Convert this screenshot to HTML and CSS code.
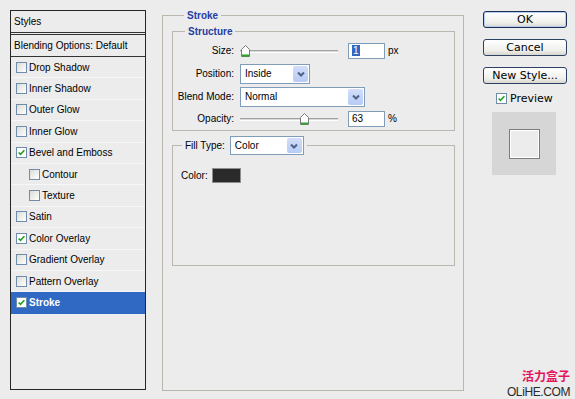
FILE: index.html
```html
<!DOCTYPE html>
<html lang="en">
<head>
    <meta charset="UTF-8">
    <meta name="viewport" content="width=device-width, initial-scale=1.0">
    <title>Layer Style</title>
    <link rel="stylesheet" href="styles.css">
</head>
<body>
    <div class="dialog">
        <!-- lijevi popis stilova -->
        <div class="styles-list">
            <div class="list-head">Styles</div>
            <div class="list-blend">Blending Options: Default</div>
            <div class="list-row"><span class="cb"></span>Drop Shadow</div>
            <div class="list-row"><span class="cb"></span>Inner Shadow</div>
            <div class="list-row"><span class="cb"></span>Outer Glow</div>
            <div class="list-row"><span class="cb"></span>Inner Glow</div>
            <div class="list-row"><span class="cb on"><svg viewBox="0 0 11 11"><path d="M2 5.5 L4.3 7.8 L9 2.8"/></svg></span>Bevel and Emboss</div>
            <div class="list-row sub"><span class="cb"></span>Contour</div>
            <div class="list-row sub"><span class="cb"></span>Texture</div>
            <div class="list-row"><span class="cb"></span>Satin</div>
            <div class="list-row"><span class="cb on"><svg viewBox="0 0 11 11"><path d="M2 5.5 L4.3 7.8 L9 2.8"/></svg></span>Color Overlay</div>
            <div class="list-row"><span class="cb"></span>Gradient Overlay</div>
            <div class="list-row"><span class="cb"></span>Pattern Overlay</div>
            <div class="list-row selected"><span class="cb on"><svg viewBox="0 0 11 11"><path d="M2 5.5 L4.3 7.8 L9 2.8"/></svg></span>Stroke</div>
        </div>

        <!-- srednji dio: postavke -->
        <div class="main">
            <fieldset class="group outer">
                <legend class="title">Stroke</legend>

                <fieldset class="group structure">
                    <legend class="title">Structure</legend>

                    <div class="field size-row">
                        <span class="lbl">Size:</span>
                        <div class="slider">
                            <span class="track"></span>
                            <svg class="thumb" style="left: 1px" viewBox="0 0 9 12"><path d="M0.5 4.5 L4.5 0.5 L8.5 4.5 V11.5 H0.5 Z" fill="#fff" stroke="#7a7a7a"/><path d="M1 10.5 H8" stroke="#2ea02e" stroke-width="2"/></svg>
                        </div>
                        <span class="num"><span class="sel">1</span></span>
                        <span class="unit">px</span>
                    </div>

                    <div class="field pos-row">
                        <span class="lbl">Position:</span>
                        <div class="select w70">
                            <span class="val">Inside</span>
                            <span class="arrow"><svg viewBox="0 0 10 10"><path d="M2 3.5 L5 6.5 L8 3.5"/></svg></span>
                        </div>
                    </div>

                    <div class="field blend-row">
                        <span class="lbl">Blend Mode:</span>
                        <div class="select w125">
                            <span class="val">Normal</span>
                            <span class="arrow"><svg viewBox="0 0 10 10"><path d="M2 3.5 L5 6.5 L8 3.5"/></svg></span>
                        </div>
                    </div>

                    <div class="field op-row">
                        <span class="lbl">Opacity:</span>
                        <div class="slider">
                            <span class="track"></span>
                            <svg class="thumb" style="left: 60px" viewBox="0 0 9 12"><path d="M0.5 4.5 L4.5 0.5 L8.5 4.5 V11.5 H0.5 Z" fill="#fff" stroke="#7a7a7a"/><path d="M1 10.5 H8" stroke="#2ea02e" stroke-width="2"/></svg>
                        </div>
                        <span class="num">63</span>
                        <span class="unit">%</span>
                    </div>
                </fieldset>

                <fieldset class="group fill">
                    <legend class="fill-legend">
                        <span class="fill-lbl">Fill Type:</span>
                        <div class="select w74">
                            <span class="val">Color</span>
                            <span class="arrow"><svg viewBox="0 0 10 10"><path d="M2 3.5 L5 6.5 L8 3.5"/></svg></span>
                        </div>
                    </legend>
                    <div class="color-row">
                        <span>Color:</span>
                        <span class="swatch"></span>
                    </div>
                </fieldset>
            </fieldset>
        </div>

        <!-- desni gumbi -->
        <div class="actions">
            <div class="btn default">OK</div>
            <div class="btn">Cancel</div>
            <div class="btn">New Style...</div>
            <div class="preview-check">
                <span class="cb on"><svg viewBox="0 0 11 11"><path d="M2 5.5 L4.3 7.8 L9 2.8"/></svg></span>Preview
            </div>
            <div class="preview-box">
                <div class="preview-square"></div>
            </div>
        </div>

        <div class="watermark">
            <div class="wm-cn">活力盒子</div>
            <div class="wm-en">OLiHE.COM</div>
        </div>
    </div>
</body>
</html>
```

FILE: styles.css
```css
* {
    margin: 0;
    padding: 0;
    box-sizing: border-box;
}

html, body {
    width: 100%;
    height: 100%;
    overflow: hidden;
    background: #ececec;
}

body {
    font-family: "Liberation Sans", Arial, sans-serif;
    font-size: 10px;
    color: #000;
}

.dialog {
    position: relative;
    display: flex;
    align-items: flex-start;
    height: 399px;
    padding: 10px 0 0 10px;
}

/* popis stilova */
.styles-list {
    width: 136px;
    height: 380px;
    border: 1px solid #262626;
    display: flex;
    flex-direction: column;
}

.list-head {
    height: 24px;
    line-height: 21px;
    padding-left: 3px;
    border-bottom: 3px double #333;
}

.list-blend {
    height: 22px;
    line-height: 21px;
    padding-left: 3px;
    border-bottom: 1px solid #333;
}

.list-row {
    height: 21.4px;
    display: flex;
    align-items: center;
    padding-left: 5px;
    border-bottom: 1px solid #f7f7f7;
}

.list-row.sub {
    padding-left: 18px;
}

.list-row.selected {
    background: #2f69c4;
    color: #fff;
    font-weight: bold;
    border-bottom-color: #2f69c4;
}

.cb {
    width: 11px;
    height: 11px;
    margin-right: 2px;
    border: 1px solid #6f8cab;
    background: linear-gradient(135deg, #dcdcd6, #fff);
    display: inline-flex;
    flex-shrink: 0;
}

.cb svg {
    width: 9px;
    height: 9px;
}

.cb path {
    fill: none;
    stroke: #21a121;
    stroke-width: 2;
}

.cb.on {
    background: #fff;
}

/* srednji dio */
.main {
    margin-left: 16px;
}

.group {
    border: 1px solid #bab7af;
    min-width: 0;
}

.title {
    color: #1f3ea3;
    font-weight: bold;
    padding: 0 3px;
    margin-left: 12px;
}

.outer {
    width: 302px;
    height: 381px;
    padding: 5px 0 0 9px;
}

.structure {
    width: 283px;
    height: 105px;
    padding-top: 2px;
}

.field {
    display: flex;
    align-items: center;
    height: 23px;
}

.op-row {
    height: 21px;
}

.lbl {
    width: 61px;
    text-align: right;
    margin-right: 6px;
}

.slider {
    position: relative;
    width: 98px;
    height: 14px;
}

.track {
    position: absolute;
    left: 0;
    right: 0;
    top: 6px;
    height: 3px;
    border-top: 1px solid #a3a3a3;
    border-bottom: 1px solid #fff;
    background: #d8d8d8;
}

.thumb {
    position: absolute;
    top: 1px;
    width: 9px;
    height: 12px;
}

.num {
    width: 37px;
    height: 16px;
    margin-left: 10px;
    border: 1px solid #7f9db9;
    background: #fff;
    line-height: 14px;
    padding-left: 3px;
}

.sel {
    background: #2f69c4;
    color: #fff;
    padding: 0 1px;
}

.unit {
    margin-left: 3px;
}

.select {
    height: 20px;
    border: 1px solid #7f9db9;
    background: #fff;
    display: flex;
    align-items: center;
    justify-content: space-between;
    padding: 1px;
}

.w70 { width: 70px; }
.w125 { width: 125px; }
.w74 { width: 74px; height: 19px; }

.val {
    padding-left: 3px;
}

.arrow {
    width: 15px;
    height: 100%;
    background: linear-gradient(#d2defa, #b7cbf5);
    border-radius: 2px;
    display: flex;
    align-items: center;
    justify-content: center;
}

.arrow svg {
    width: 10px;
    height: 10px;
}

.arrow path {
    fill: none;
    stroke: #4d6185;
    stroke-width: 2;
}

.fill {
    width: 283px;
    height: 130px;
    margin-top: 5px;
    padding: 13px 0 0 8px;
}

.fill-legend {
    display: flex;
    align-items: center;
    margin-left: 1px;
    padding: 0 3px;
}

.fill-lbl {
    margin-right: 5px;
}

.color-row {
    display: flex;
    align-items: center;
    gap: 4px;
}

.swatch {
    width: 29px;
    height: 15px;
    background: #2a2a2a;
    border: 1px solid #8e8e8e;
}

/* desni gumbi */
.actions {
    margin-left: 19px;
    width: 84px;
    display: flex;
    flex-direction: column;
    font-family: "DejaVu Sans", sans-serif;
    font-size: 11px;
}

.btn {
    height: 17px;
    margin-top: 1px;
    margin-bottom: 10px;
    border: 1px solid #2d4263;
    border-radius: 3px;
    background: linear-gradient(#fff, #f0efec 70%, #d9d6ce);
    text-align: center;
    line-height: 15px;
}

.btn:nth-child(3) {
    margin-bottom: 8px;
}

.btn.default {
    border-color: #1a2f52;
    box-shadow: inset 0 0 0 1px #b8cdf3;
}

.preview-check {
    display: flex;
    align-items: center;
    margin: 0 0 7px 13px;
}

.preview-check .cb {
    margin-right: 3px;
}

.preview-box {
    width: 64px;
    height: 63px;
    margin-left: 9px;
    background: #d6d6d6;
    display: flex;
    align-items: center;
    justify-content: center;
}

.preview-square {
    width: 31px;
    height: 30px;
    background: #ececec;
    border: 1px solid #7d7d7d;
    box-shadow: inset -1px -1px 0 #fff, inset 1px 1px 0 #fff;
}

/* vodeni žig */
.watermark {
    position: absolute;
    right: 5px;
    bottom: 1px;
    text-align: right;
}

.wm-cn {
    font-family: "Noto Sans CJK SC", sans-serif;
    font-weight: bold;
    font-size: 12px;
    line-height: 14px;
    margin-bottom: 3px;
    color: #e3145e;
}

.wm-en {
    font-family: "Liberation Sans", Arial, sans-serif;
    font-size: 12px;
    line-height: 12px;
    letter-spacing: -0.4px;
    color: #2a2a2a;
}
```
